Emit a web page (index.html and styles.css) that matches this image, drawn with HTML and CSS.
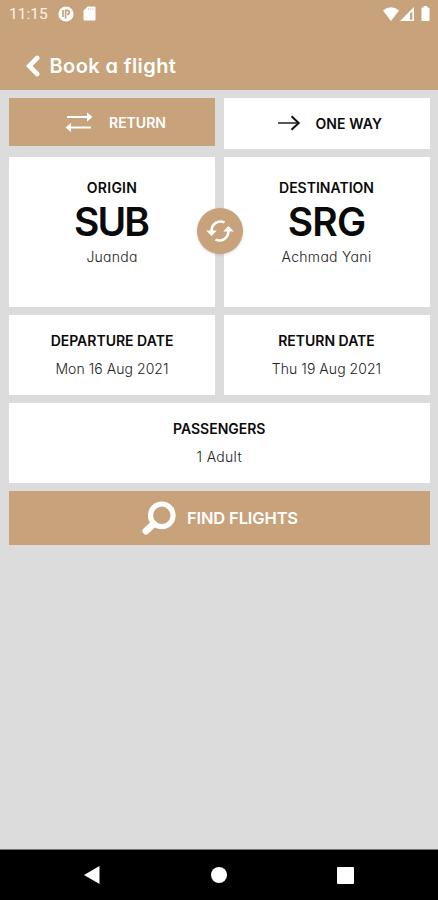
FILE: index.html
```html
<!DOCTYPE html>
<html lang="en">
<head>
<meta charset="utf-8">
<title>Book a flight</title>
<link rel="stylesheet" href="styles.css">
</head>
<body>
<div class="screen">
  <header class="header">
    <div class="status">
      <span class="time">11:15</span>
      <svg class="app-icon" width="16" height="16" viewBox="0 0 16 16"><circle cx="8" cy="8" r="7.6" fill="#fff"/><path d="M5 4v7M7.600 12.500V4.400h1.600a2 2 0 0 1 0 4" fill="none" stroke="#c8a27a" stroke-width="1.700"/></svg>
      <svg class="card-icon" width="13" height="15" viewBox="0 0 13 15"><path d="M4.6.5h6.9q1 0 1 1v12q0 1-1 1h-10q-1 0-1-1V4.8z" fill="#fff"/><path d="M5.5 2v2M7.7 2v2M9.9 2v2" stroke="#e7d5c3"/></svg>
      <span class="spacer"></span>
      <svg width="16" height="14" viewBox="0 0 16 14"><path d="M0 3.5Q8-3 16 3.5L8 14z" fill="#fff"/></svg>
      <svg class="signal" width="14" height="14" viewBox="0 0 14 14"><path d="M0 14L14 0v14z" fill="#fff"/><path d="M10 6v6.8h2.3V5z" fill="#c8a27a"/></svg>
      <svg class="battery" width="9" height="15" viewBox="0 0 10 15" preserveAspectRatio="none"><path d="M3 0h4v1.5h1.5q1 0 1 1V14q0 1-1 1h-7q-1 0-1-1V2.500q0-1 1-1H3z" fill="#fff"/></svg>
    </div>
    <div class="title-bar">
      <svg width="14" height="22" viewBox="0 0 14 22"><path d="M11.200 3L3.200 11l8 8" fill="none" stroke="#fff" stroke-width="4.600" stroke-linecap="round"/></svg>
      <h1 class="title">Book a flight</h1>
    </div>
  </header>
  <main class="content">
    <div class="row tabs">
      <button class="tab tab-active">
        <svg width="28" height="22" viewBox="0 0 28 22"><path d="M2 6h21M5 16.500h21" stroke="#fff" stroke-width="2.200"/><path d="M22 1.200L27.400 6 22 10.800zM6 11.700L.6 16.500 6 21.300z" fill="#fff"/></svg>
        <span>RETURN</span>
      </button>
      <button class="tab tab-plain">
        <svg width="24" height="16" viewBox="0 0 24 16"><path d="M1 8h20.500" stroke="#444" stroke-width="1.800"/><path d="M14.500 1.200L21.700 8l-7.200 6.800" fill="none" stroke="#111" stroke-width="2"/></svg>
        <span>ONE WAY</span>
      </button>
    </div>
    <div class="row airports">
      <section class="card">
        <h2 class="label label-origin">ORIGIN</h2>
        <div class="code code-origin">SUB</div>
        <div class="detail city-origin">Juanda</div>
      </section>
      <section class="card">
        <h2 class="label">DESTINATION</h2>
        <div class="code">SRG</div>
        <div class="detail city-destination">Achmad Yani</div>
      </section>
      <button class="swap" aria-label="Swap airports">
        <svg width="28" height="24" viewBox="0 0 28 24"><path d="M18.500 3.400C12.500 0.800 5.600 4.500 5.600 12M9.500 20.600C15.500 23.200 22.400 19.500 22.400 12" fill="none" stroke="#fff" stroke-width="2.600"/><path d="M.2 11.500h10.600L5.600 17zM17.200 12.500h10.600L22.400 7z" fill="#fff"/></svg>
      </button>
    </div>
    <div class="row dates">
      <section class="card">
        <h2 class="label">DEPARTURE DATE</h2>
        <div class="detail">Mon 16 Aug 2021</div>
      </section>
      <section class="card">
        <h2 class="label">RETURN DATE</h2>
        <div class="detail">Thu 19 Aug 2021</div>
      </section>
    </div>
    <section class="card passengers">
      <h2 class="label">PASSENGERS</h2>
      <div class="detail">1 Adult</div>
    </section>
    <button class="find">
      <svg width="34" height="34" viewBox="0 0 34 34"><circle cx="19.800" cy="14.300" r="11.300" fill="none" stroke="#fff" stroke-width="5.200"/><path d="M11.500 23l-7.500 7" stroke="#fff" stroke-width="7" stroke-linecap="round"/></svg>
      <span>FIND FLIGHTS</span>
    </button>
  </main>
  <nav class="nav">
    <svg width="16" height="20" viewBox="0 0 16 20"><path d="M0 10L15.500 1v18z" fill="#fff"/></svg>
    <svg width="16" height="16" viewBox="0 0 16 16"><circle cx="8" cy="8" r="8" fill="#fff"/></svg>
    <svg width="17" height="17" viewBox="0 0 17 17"><rect width="17" height="17" rx="1" fill="#fff"/></svg>
  </nav>
</div>
</body>
</html>
```
FILE: styles.css
```css
* { box-sizing: border-box; }
body { margin: 0; font-family: Inter, "Liberation Sans", sans-serif; font-feature-settings: "cv11"; color: #0a0a0a; }
button { border: 0; padding: 0; font: inherit; font-feature-settings: inherit; color: inherit; }
h1, h2 { margin: 0; }
svg { display: block; flex: none; }
span { white-space: nowrap; }

.screen { width: 438px; height: 900px; display: flex; flex-direction: column; background: #dcdcdc; }
.header { height: 90px; flex: none; background: #c8a27a; color: #fff; }
.status { height: 27px; display: flex; align-items: center; padding: 0 8px 0 9px; }
.time { font: 400 15.5px/28px Roboto, sans-serif; width: 49px; letter-spacing: 0; color: #fbf3e9; }
.card-icon { margin-left: 9px; }
.spacer { flex: 1; }
.signal { margin-left: 1px; }
.battery { margin-left: 7px; }
.title-bar { display: flex; align-items: center; height: 40px; margin-top: 19px; padding-left: 26px; }
.title { font-size: 20px; line-height: 40px; font-weight: 600; margin-left: 9.5px; letter-spacing: 0.4px; }

.content { flex: 1; display: flex; flex-direction: column; padding: 8px 8.5px 0 9px; }
.row { display: grid; grid-template-columns: 1fr 1fr; gap: 8.5px; position: relative; }
.tabs { height: 50.5px; align-items: start; }
.tab { display: flex; align-items: center; font-size: 14px; font-weight: 600; }
.tab-active { height: 48px; background: #c8a27a; color: #fff; padding-left: 56px; gap: 16px; }
.tab-plain { height: 50.5px; background: #fff; padding-left: 53px; gap: 15px; font-weight: 600; letter-spacing: 0.1px; }
.card { background: #fff; display: flex; flex-direction: column; align-items: center; white-space: nowrap; }
.label { font-size: 14px; line-height: 20px; font-weight: 600; }
.label-origin { letter-spacing: 0.25px; }
.detail { font-size: 14px; line-height: 20px; font-weight: 300; color: #222; letter-spacing: 0.05px; }
.city-origin { letter-spacing: 0.25px; }
.city-destination { letter-spacing: 0.3px; }
.code { font-size: 39px; line-height: 44px; font-weight: 600; margin-top: 2px; letter-spacing: -0.8px; }
.code-origin { letter-spacing: -2px; padding-right: 2px; }
.airports { height: 149.5px; margin-top: 8.5px; }
.airports .card { padding-top: 21px; }
.airports .detail { margin-top: 3px; }
.swap { position: absolute; left: 188px; top: 51px; width: 46px; height: 46px; border-radius: 50%; background: #c8a27a; display: grid; place-items: center; box-shadow: 0 1px 3px rgba(0, 0, 0, 0.15); }
.dates { height: 79.5px; margin-top: 8.5px; }
.dates .card, .passengers { padding-top: 16px; }
.dates .detail, .passengers .detail { margin-top: 8px; }
.passengers { height: 80px; margin-top: 8.5px; }
.passengers .detail { letter-spacing: 0.3px; }
.find { height: 54px; margin-top: 8px; background: #c8a27a; color: #fff; display: flex; align-items: center; padding-left: 133px; gap: 11px; font-size: 16.5px; font-weight: 600; letter-spacing: -0.15px; }
.nav { height: 51px; flex: none; background: #000; border-top: 1px solid #777; display: flex; align-items: center; justify-content: space-between; padding: 0 84px; }
```
